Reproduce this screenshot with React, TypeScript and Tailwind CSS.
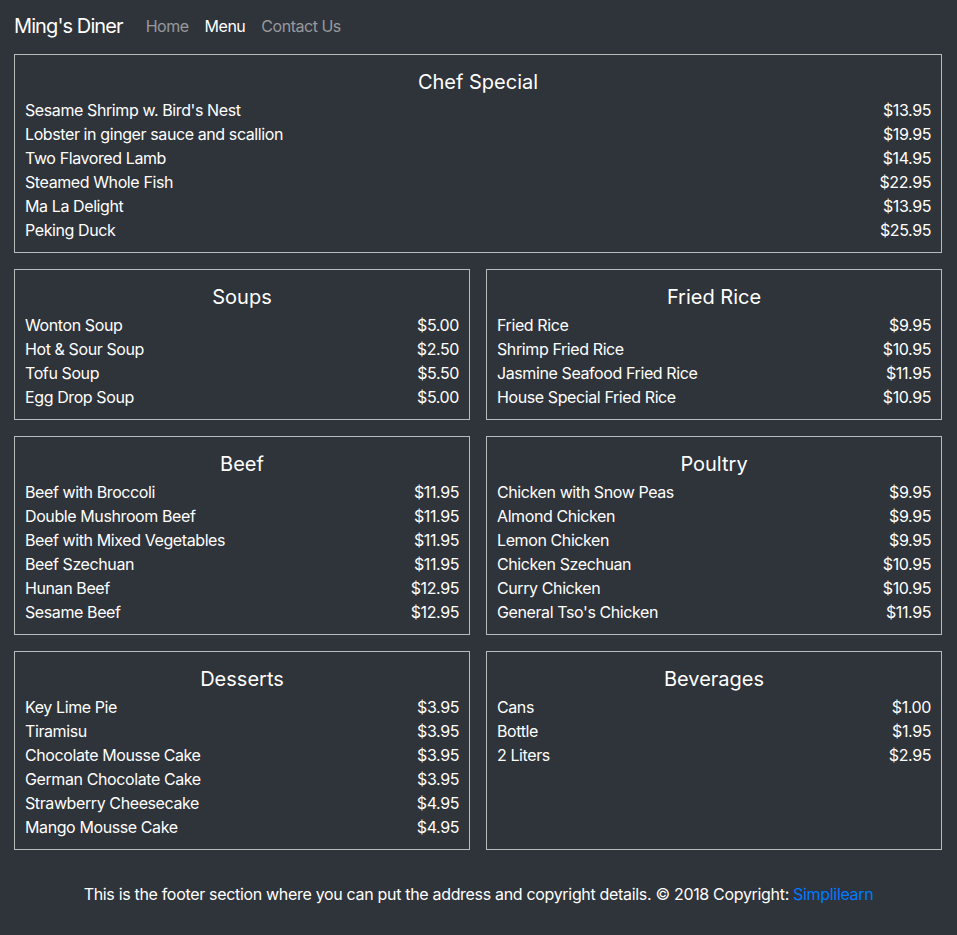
import React from 'react';

type Item = { name: string; price: string };

const chefSpecial: Item[] = [
  { name: "Sesame Shrimp w. Bird's Nest", price: '$13.95' },
  { name: 'Lobster in ginger sauce and scallion', price: '$19.95' },
  { name: 'Two Flavored Lamb', price: '$14.95' },
  { name: 'Steamed Whole Fish', price: '$22.95' },
  { name: 'Ma La Delight', price: '$13.95' },
  { name: 'Peking Duck', price: '$25.95' },
];

const sections: { title: string; items: Item[] }[] = [
  {
    title: 'Soups',
    items: [
      { name: 'Wonton Soup', price: '$5.00' },
      { name: 'Hot & Sour Soup', price: '$2.50' },
      { name: 'Tofu Soup', price: '$5.50' },
      { name: 'Egg Drop Soup', price: '$5.00' },
    ],
  },
  {
    title: 'Fried Rice',
    items: [
      { name: 'Fried Rice', price: '$9.95' },
      { name: 'Shrimp Fried Rice', price: '$10.95' },
      { name: 'Jasmine Seafood Fried Rice', price: '$11.95' },
      { name: 'House Special Fried Rice', price: '$10.95' },
    ],
  },
  {
    title: 'Beef',
    items: [
      { name: 'Beef with Broccoli', price: '$11.95' },
      { name: 'Double Mushroom Beef', price: '$11.95' },
      { name: 'Beef with Mixed Vegetables', price: '$11.95' },
      { name: 'Beef Szechuan', price: '$11.95' },
      { name: 'Hunan Beef', price: '$12.95' },
      { name: 'Sesame Beef', price: '$12.95' },
    ],
  },
  {
    title: 'Poultry',
    items: [
      { name: 'Chicken with Snow Peas', price: '$9.95' },
      { name: 'Almond Chicken', price: '$9.95' },
      { name: 'Lemon Chicken', price: '$9.95' },
      { name: 'Chicken Szechuan', price: '$10.95' },
      { name: 'Curry Chicken', price: '$10.95' },
      { name: "General Tso's Chicken", price: '$11.95' },
    ],
  },
  {
    title: 'Desserts',
    items: [
      { name: 'Key Lime Pie', price: '$3.95' },
      { name: 'Tiramisu', price: '$3.95' },
      { name: 'Chocolate Mousse Cake', price: '$3.95' },
      { name: 'German Chocolate Cake', price: '$3.95' },
      { name: 'Strawberry Cheesecake', price: '$4.95' },
      { name: 'Mango Mousse Cake', price: '$4.95' },
    ],
  },
  {
    title: 'Beverages',
    items: [
      { name: 'Cans', price: '$1.00' },
      { name: 'Bottle', price: '$1.95' },
      { name: '2 Liters', price: '$2.95' },
    ],
  },
];

const MenuCard: React.FC<{ title: string; items: Item[] }> = ({ title, items }) => (
  <div className="border border-[#b9babc] px-[10px] pt-[11px] pb-[10px]">
    <h2 className="text-center text-[20px] leading-[32px]">{title}</h2>
    <ul className="tracking-[-0.025em]">
      {items.map((item) => (
        <li key={item.name} className="flex justify-between text-[16px] leading-[24px]">
          <span>{item.name}</span>
          <span>{item.price}</span>
        </li>
      ))}
    </ul>
  </div>
);

const App: React.FC = () => {
  return (
    <div className="min-h-screen bg-[#2f333a] text-white font-['Inter','Liberation_Sans',sans-serif]">
      <nav className="h-[54px] px-[14px] flex items-center">
        <span className="text-[20px] leading-[30px] mr-[15px] pb-[2px] tracking-[-0.045em]">Ming's Diner</span>
        <div className="flex text-[16px] leading-[24px] pb-[2px] tracking-[-0.03em]">
          <a className="px-2 text-white/50">Home</a>
          <a className="px-2 text-white">Menu</a>
          <a className="px-2 text-white/50">Contact Us</a>
        </div>
      </nav>

      <main className="pl-[14px] pr-[15px] flex flex-col gap-4">
        <MenuCard title="Chef Special" items={chefSpecial} />
        <div className="grid grid-cols-2 gap-4">
          {sections.map((s) => (
            <MenuCard key={s.title} title={s.title} items={s.items} />
          ))}
        </div>
      </main>

      <footer className="h-[86px] pt-[2px] flex items-center justify-center text-[16px] tracking-[-0.02em]">
        <p>
          This is the footer section where you can put the address and copyright details. © 2018 Copyright:{' '}
          <a className="text-[#007bff]">Simplilearn</a>
        </p>
      </footer>
    </div>
  );
};

export default App;
